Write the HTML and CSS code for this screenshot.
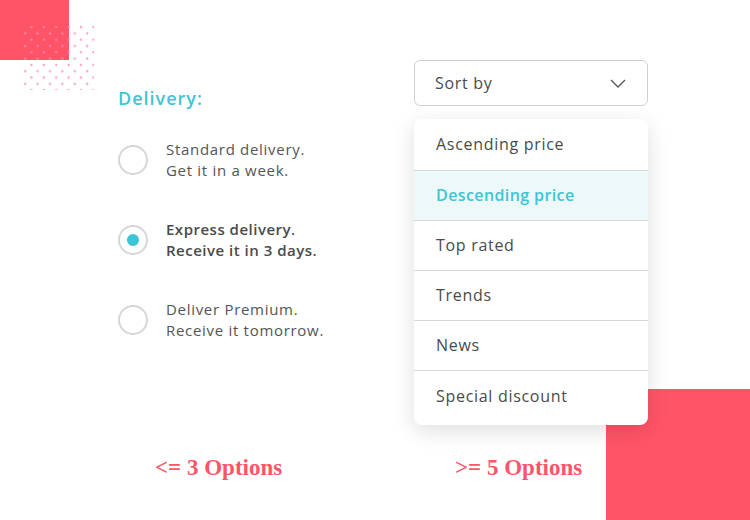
FILE: index.html
```html
<!DOCTYPE html>
<html>
<head>
<meta charset="utf-8">
<link rel="stylesheet" href="styles.css">
</head>
<body>
<div class="page">
  <div class="decor-tl"></div>
  <svg class="dots" width="70" height="64" viewBox="0 0 70 64">
    <defs>
      <pattern id="dp" x="0" y="0" width="12.4" height="12.6" patternUnits="userSpaceOnUse">
        <circle cx="7.4" cy="1.2" r="1.1" fill="#ff8db0"/>
        <circle cx="1.2" cy="7.5" r="1.1" fill="#ff8db0"/>
      </pattern>
    </defs>
    <rect x="0" y="0" width="70" height="64" fill="url(#dp)"/>
  </svg>
  <div class="decor-br"></div>

  <div class="columns">
    <section class="delivery">
      <h2 class="title">Delivery:</h2>
      <ul class="radios">
        <li class="radio">
          <span class="circle"></span>
          <span class="label">Standard delivery.<br>Get it in a week.</span>
        </li>
        <li class="radio checked">
          <span class="circle"><span class="dot"></span></span>
          <span class="label">Express delivery.<br>Receive it in 3 days.</span>
        </li>
        <li class="radio">
          <span class="circle"></span>
          <span class="label">Deliver Premium.<br>Receive it tomorrow.</span>
        </li>
      </ul>
    </section>
    <section class="sort">
      <div class="select">
        <span>Sort by</span>
        <svg class="chev" width="16" height="9" viewBox="0 0 16 9"><path d="M1 1 L8 8 L15 1" fill="none" stroke="#555" stroke-width="1.3"/></svg>
      </div>
      <ul class="menu">
        <li class="opt first">Ascending price</li>
        <li class="opt active">Descending price</li>
        <li class="opt">Top rated</li>
        <li class="opt">Trends</li>
        <li class="opt">News</li>
        <li class="opt last">Special discount</li>
      </ul>
    </section>
  </div>
  <div class="captions">
    <div class="cap cap-left">&lt;= 3 Options</div>
    <div class="cap cap-right">&gt;= 5 Options</div>
  </div>
</div>
</body>
</html>
```
FILE: styles.css
```css
* { box-sizing: border-box; }
html, body { margin: 0; padding: 0; background: #fff; }
body { font-family: "Open Sans", "Lato", sans-serif; color: #4a4a4a; }
.page { position: relative; width: 750px; height: 520px; overflow: hidden; background: #fff; }
.decor-tl { position: absolute; left: 0; top: 0; width: 69px; height: 60px; background: #ff5468; }
.dots { position: absolute; left: 24px; top: 26px; }
.decor-br { position: absolute; left: 606px; top: 389px; width: 144px; height: 131px; background: #ff5468; }

.columns { position: relative; display: flex; padding-top: 60px; padding-left: 118px; }
.delivery { width: 296px; }
.title { margin: 26px 0 0 0; font-size: 18px; font-weight: 600; color: #3cc5d6; line-height: 24px; letter-spacing: 1px; }
.radios { list-style: none; margin: 29px 0 0 0; padding: 0; display: flex; flex-direction: column; gap: 38px; }
.radio { display: flex; align-items: center; gap: 18px; }
.circle { width: 30px; height: 30px; border-radius: 50%; border: 2px solid #d6d6d6; display: flex; align-items: center; justify-content: center; flex: none; }
.dot { width: 12px; height: 12px; border-radius: 50%; background: #3cc5d6; }
.label { font-size: 15px; line-height: 21px; color: #555; letter-spacing: 0.7px; }
.checked .label { font-weight: 600; color: #4a4a4a; letter-spacing: 0.5px; }

.sort { width: 234px; }
.select { height: 46px; border: 1px solid #cfcfcf; border-radius: 6px; display: flex; align-items: center; justify-content: space-between; padding: 0 21px 0 20px; font-size: 16px; color: #4a4a4a; letter-spacing: 0.7px; }
.menu { list-style: none; margin: 13px 0 0 0; padding: 0; background: #fff; border-radius: 8px; box-shadow: 0 6px 22px rgba(0,0,0,0.13); overflow: hidden; }
.opt { height: 50px; display: flex; align-items: center; padding-left: 22px; padding-bottom: 2px; font-size: 16px; color: #4a4a4a; border-top: 1px solid #d8d8d8; letter-spacing: 0.7px; }
.opt.first { border-top: none; height: 51px; }
.opt.last { height: 55px; padding-bottom: 4px; }
.opt.active { background: #edf8f9; color: #3cc5d6; font-weight: 600; letter-spacing: 0.4px; }

.captions { position: relative; display: flex; margin-top: 29px; }
.cap { font-family: "Liberation Serif", "DejaVu Serif", serif; font-weight: 700; font-size: 23px; color: #ff5468; line-height: 28px; }
.cap-left { margin-left: 155px; width: 300px; }
```
